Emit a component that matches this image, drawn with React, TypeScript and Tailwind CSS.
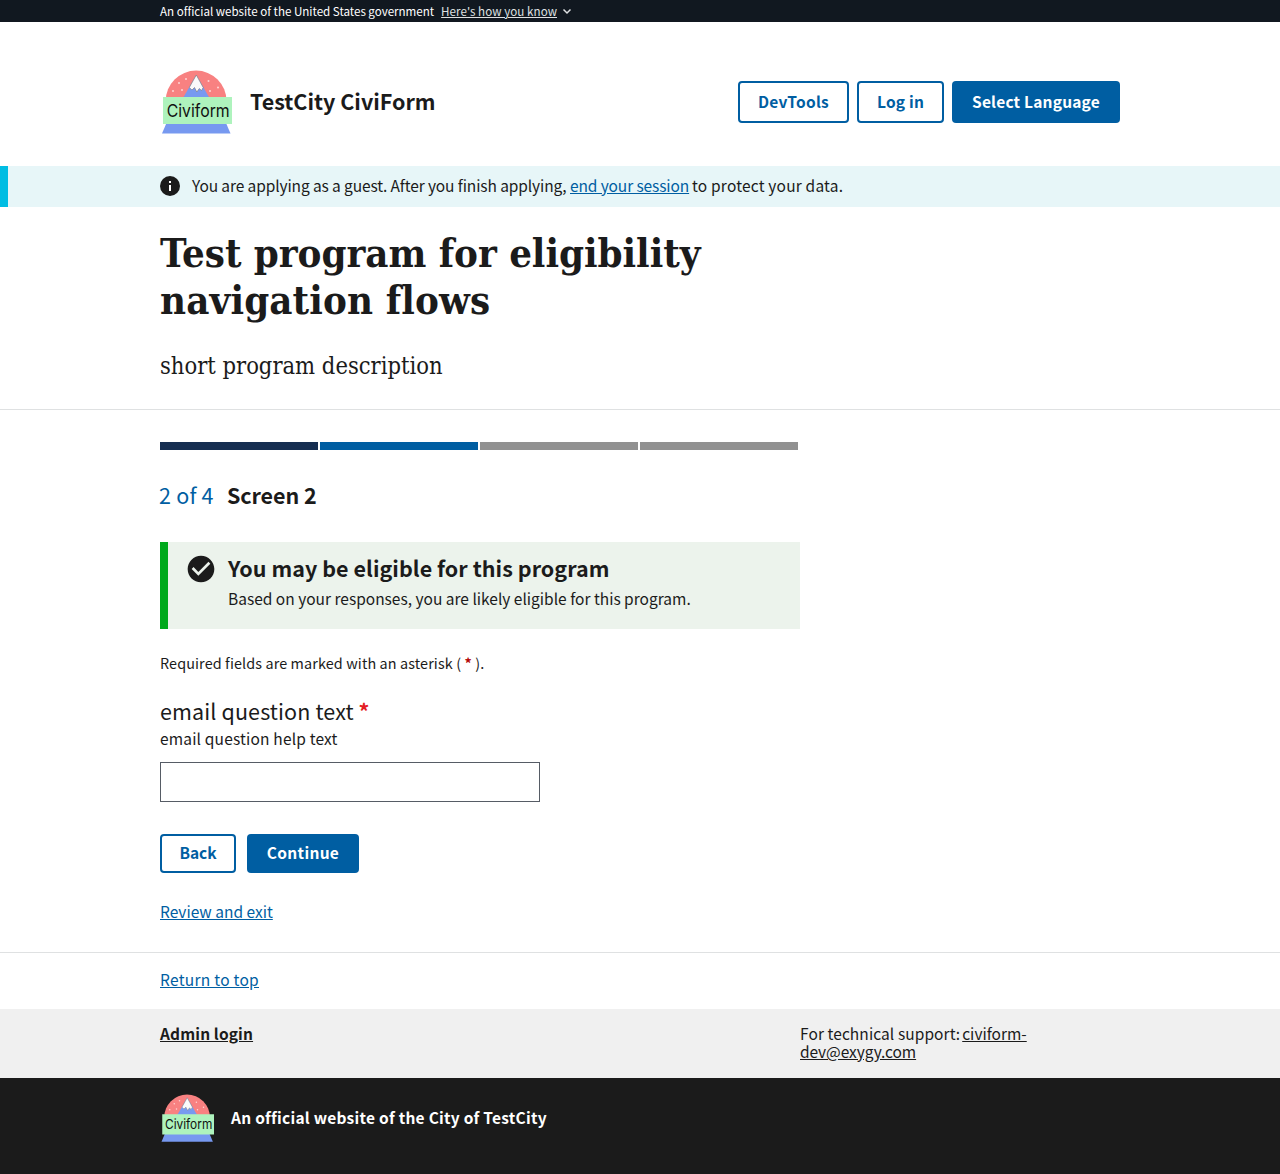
import React from "react";

function Logo({ className }: { className: string }) {
  return (
    <svg className={className} viewBox="0 0 72 66">
      <path d="M5.700 32a30.400 30.400 0 0 1 60.800 0z" fill="#f88181" />
      <path d="M36.300 6L23 29h26.500z" fill="#7799f0" />
      <path d="M36.300 6L29.300 18.500l2.700 2.500 2.500-2.500 2.300 4.500 2.500-3.500 2.200 2 1.700-3z" fill="#fafafa" stroke="#777" strokeWidth=".6" />
      <g fill="#ffd5d5">
        <circle cx="19" cy="14" r="1" /><circle cx="26" cy="10" r="1" /><circle cx="13" cy="22" r="1" />
        <circle cx="22" cy="21" r="1" /><circle cx="48.500" cy="12" r="1" /><circle cx="58" cy="18.500" r="1" />
        <circle cx="50" cy="22" r="1" />
      </g>
      <path d="M6.500 54h59.500l4.500 10.500H2z" fill="#7799f0" />
      <rect x="3" y="28" width="69" height="27" fill="#aef3bd" />
      <text x="6.700" y="48.300" fontSize="17.600" textLength="63" lengthAdjust="spacingAndGlyphs" fontFamily="Inter" fill="#111">Civiform</text>
    </svg>
  );
}

const outline = "flex items-center justify-center rounded border-2 border-[#005ea2] bg-white font-bold text-[#005ea2]";
const solid = "flex items-center justify-center rounded bg-[#005ea2] font-bold text-white";
const steps = ["bg-[#162e51]", "bg-[#005ea2]", "bg-[#919191]", "bg-[#919191]"];

export default function App() {
  return (
    <div className="h-[1174px] w-[1280px] overflow-hidden bg-white font-['Noto_Sans_CJK_SC',sans-serif] text-[15.500px] leading-[18px] text-[#1b1b1b]">
      <div className="flex h-[22px] items-center bg-[#111820] pl-40 text-[11.600px] text-white">
        <span className="tracking-[-0.020px]">An official website of the United States government</span>
        <a className="ml-[7px] tracking-[0.050px] text-[#dfe1e2] underline">Here's how you know</a>
        <svg className="ml-1 h-3 w-3" viewBox="0 0 12 12" fill="none" stroke="#dfe1e2" strokeWidth="1.500"><path d="M2.500 4.500L6 8l3.500-3.500" /></svg>
      </div>
      <header className="flex h-36 items-center px-40 pt-4">
        <Logo className="h-[66px] w-[72px]" />
        <span className="ml-[18px] pb-0.5 text-[21.500px] font-bold">TestCity CiviForm</span>
        <div className="ml-auto flex h-[42px] gap-2">
          <button className={outline + " w-[111px] pb-0.5 tracking-[0.250px]"}>DevTools</button>
          <button className={outline + " w-[87px] pb-0.5 tracking-[0.200px]"}>Log in</button>
          <button className={solid + " w-[168px] pb-0.5 tracking-[0.200px]"}>Select Language</button>
        </div>
      </header>
      <div className="flex h-[41px] items-center border-l-8 border-[#00bde3] bg-[#e7f6f8] pl-[152px]">
        <svg className="mb-px mr-3 h-5 w-5" viewBox="0 0 20 20"><circle cx="10" cy="10" r="10" fill="#1b1b1b" /><path d="M9 5h2v2H9zM9 9h2v6H9z" fill="#fff" /></svg>
        <p className="flex pb-[3px]"><span className="w-[378px] whitespace-nowrap tracking-[-0.110px]">You are applying as a guest. After you finish applying,</span><a className="w-[119px] whitespace-nowrap tracking-[-0.110px] text-[#005ea2] underline">end your session</a><span className="ml-[3px] tracking-[0.190px]">to protect your data.</span></p>
      </div>
      <section className="h-[203px] border-b border-[#dfe1e2] pl-40 pt-[23px] font-['DejaVu_Serif_Condensed','DejaVu_Serif',serif]">
        <h1 className="text-[39.800px] font-bold leading-[46.800px] tracking-[-0.040px]">Test program for eligibility<br /><span className="tracking-[0.120px]">navigation flows</span></h1>
        <p className="mt-[26px] text-[23.500px] leading-8">short program description</p>
      </section>
      <main className="h-[543px] border-b border-[#dfe1e2] pl-40 pt-8">
        <div className="flex w-[640px]">{steps.map((c, i) => <div key={i} className="h-2 w-40 pr-0.5"><div className={"h-2 " + c} /></div>)}</div>
        <h2 className="-ml-px mt-[33px] flex h-6 items-center text-[21.500px]"><span className="w-[68px] tracking-[0.200px] text-[#005ea2]">2 of 4</span><span className="font-bold tracking-[-0.080px]">Screen 2</span></h2>
        <div className="mt-[35px] flex h-[87px] w-[640px] border-l-8 border-[#00a91c] bg-[#ecf3ec] pl-[17px] pt-[11px]">
          <svg className="h-8 w-8" viewBox="0 0 24 24"><path fill="#1b1b1b" d="M12 2C6.480 2 2 6.480 2 12s4.480 10 10 10 10-4.480 10-10S17.520 2 12 2zm-2 15l-5-5 1.410-1.410L10 14.170l7.590-7.590L19 8l-9 9z" /></svg>
          <div className="-mt-px ml-[11px]"><h3 className="text-[21.500px] font-bold leading-8 tracking-[0.040px]">You may be eligible for this program</h3><p className="mt-[5px]">Based on your responses, you are likely eligible for this program.</p></div>
        </div>
        <p className="mt-[25px] text-[14.400px] tracking-[0.110px]">Required fields are marked with an asterisk ( <span className="font-bold text-[#b50909]">*</span> ).</p>
        <p className="mt-[23px] text-[21.500px] leading-8 tracking-[0.120px]">email question text <b className="text-[#e41d24]">*</b></p>
        <p className="mt-[2px] tracking-[0.170px]">email question help text</p>
        <input className="mt-[15px] block h-10 w-[380px] border border-[#565c65]" />
        <div className="mt-8 flex h-[39px] gap-[11px]">
          <button className={outline + " w-[76px] pb-1"}>Back</button>
          <button className={solid + " w-[112px] pb-1 tracking-[0.300px]"}>Continue</button>
        </div>
        <a className="mt-[29px] inline-block text-[#005ea2] underline">Review and exit</a>
      </main>
      <div className="flex h-14 items-center pb-[5px] pl-40"><a className="tracking-[0.280px] text-[#005ea2] underline">Return to top</a></div>
      <div className="flex h-[69px] bg-[#f0f0f0] pl-40 pt-[15px]">
        <div className="w-[640px]"><a className="font-bold tracking-[0.140px] underline">Admin login</a></div>
        <p><span className="mr-[2px] tracking-[0.080px]">For technical support:</span><a className="underline">civiform-</a><br /><a className="tracking-[-0.080px] underline">dev@exygy.com</a></p>
      </div>
      <footer className="flex h-24 items-start bg-[#1b1b1b] pl-40 pt-[15px] text-white">
        <Logo className="h-[50px] w-[54px]" />
        <span className="ml-[17px] mt-[15px] font-bold tracking-[0.250px]">An official website of the City of TestCity</span>
      </footer>
    </div>
  );
}
